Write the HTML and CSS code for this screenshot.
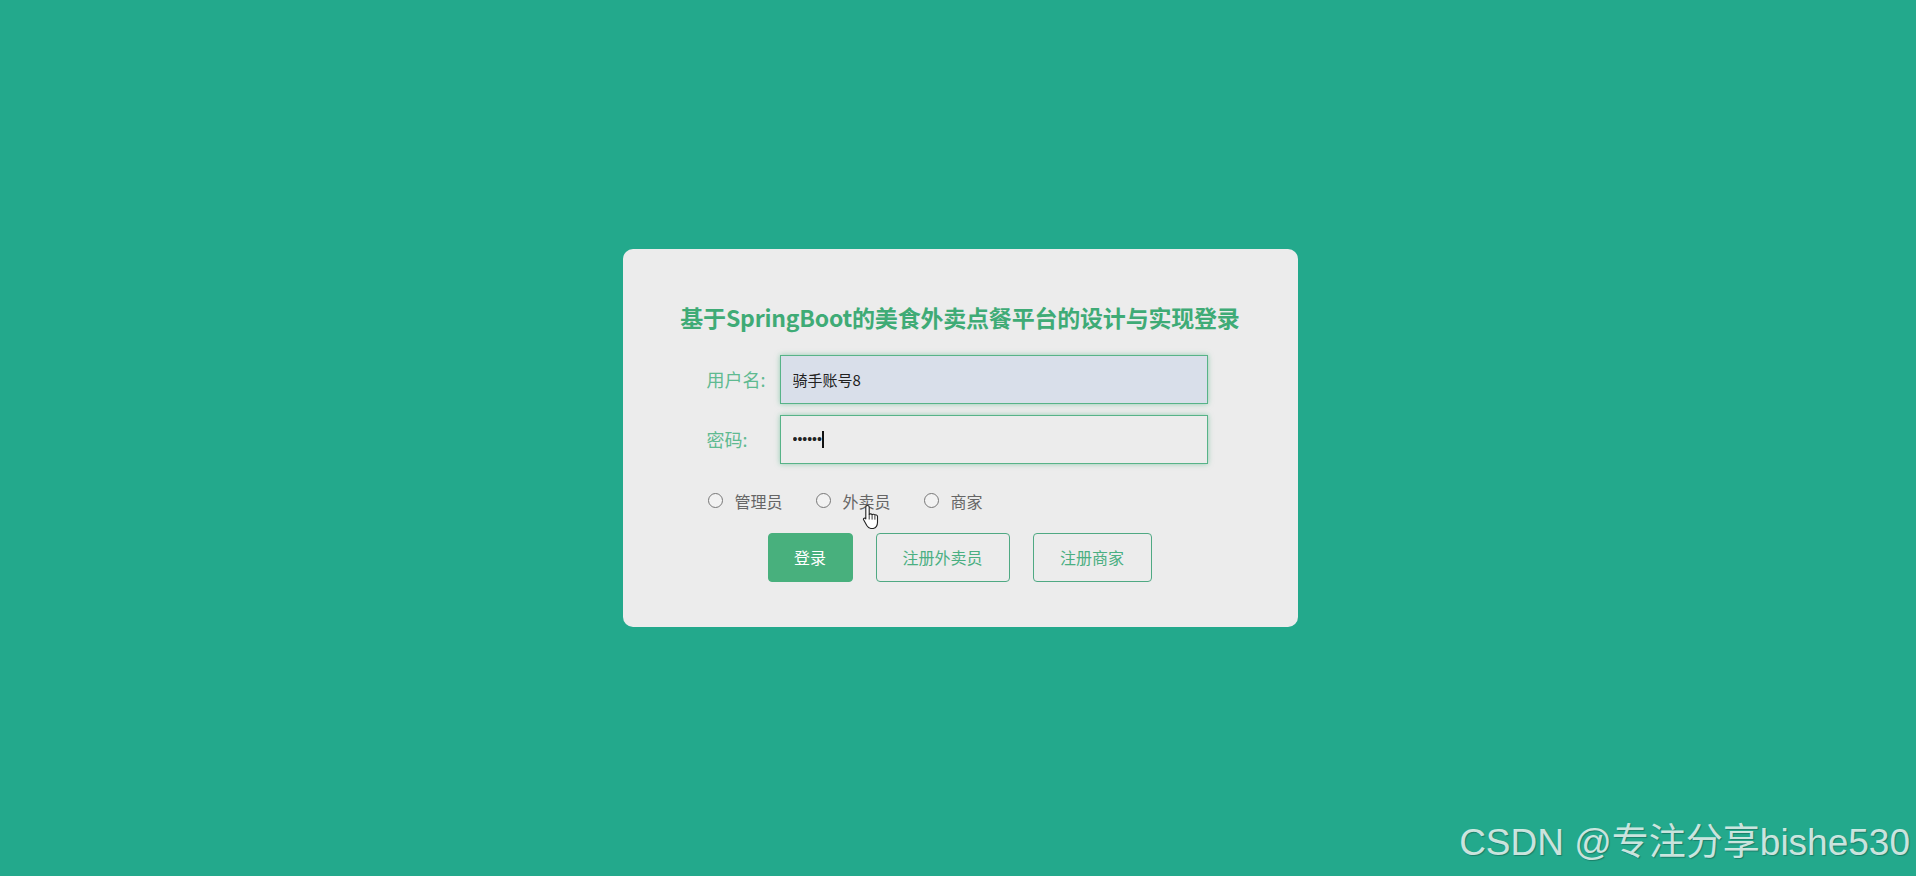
FILE: index.html
```html
<!DOCTYPE html>
<html lang="zh-CN">
<head>
<meta charset="utf-8">
<title>登录</title>
<link rel="stylesheet" href="styles.css">
</head>
<body>
<main class="page">
  <form class="card">
    <h1 class="title">基于SpringBoot的美食外卖点餐平台的设计与实现登录</h1>
    <div class="row">
      <label class="label" for="u">用户名:</label>
      <input class="field field-auto" id="u" type="text" value="骑手账号8">
    </div>
    <div class="row">
      <label class="label" for="p">密码:</label>
      <div class="field-wrap">
        <input class="field" id="p" type="password" value="123456">
        <span class="caret"></span>
      </div>
    </div>
    <div class="roles">
      <label class="role"><input type="radio" name="role" class="radio"><span>管理员</span></label>
      <label class="role"><input type="radio" name="role" class="radio"><span>外卖员</span></label>
      <label class="role"><input type="radio" name="role" class="radio"><span>商家</span></label>
      <svg class="cursor" width="18" height="26" viewBox="0 0 18 26">
        <path d="M5.5 1.5c1 0 1.7.7 1.7 1.7v7.3c.3-.9 2.7-.9 2.9.3.4-.9 2.6-.8 2.8.5.5-.7 2.5-.5 2.6 1.1v5.8c0 3-1.6 5.6-4.2 6.3H8.8c-1.8 0-3-1.4-4-3L1.6 15.8c-.5-1 .6-2.2 1.8-1.4l.4.4L3.8 3.2c0-1 .7-1.7 1.7-1.7z" fill="#fff" stroke="#222" stroke-width="1.1" stroke-linejoin="round"/>
        <path d="M7.2 10.5v5M10.1 11.1v4.5M12.9 11.9v3.8" stroke="#222" stroke-width="0.9" fill="none"/>
      </svg>
    </div>
    <div class="actions">
      <button type="button" class="btn btn-primary">登录</button>
      <button type="button" class="btn btn-outline">注册外卖员</button>
      <button type="button" class="btn btn-outline">注册商家</button>
    </div>
  </form>
  <div class="watermark">CSDN @专注分享bishe530</div>
</main>
</body>
</html>
```
FILE: styles.css
```css
html, body {
  margin: 0;
  padding: 0;
}
body {
  background: #23a98c;
  font-family: "Noto Sans CJK SC", "Noto Sans", sans-serif;
}
.page {
  position: relative;
  height: 876px;
  display: flex;
  align-items: center;
  justify-content: center;
}
.card {
  box-sizing: border-box;
  width: 675px;
  margin-left: 4px;
  margin-top: -1px;
  background: #ececec;
  border-radius: 10px;
  padding: 52px 0 45px 84px;
  display: flex;
  flex-direction: column;
}
.title {
  margin: 0 0 22px -84px;
  width: 675px;
  text-align: center;
  font-size: 23px;
  line-height: 32px;
  font-weight: 700;
  color: #3fab76;
  letter-spacing: -0.2px;
  white-space: nowrap;
}
.row {
  display: flex;
  align-items: center;
  margin-bottom: 11px;
}
.label {
  width: 73px;
  font-size: 18px;
  color: #5fba91;
  white-space: nowrap;
}
.field-wrap {
  position: relative;
  display: flex;
}
.field {
  box-sizing: border-box;
  width: 428px;
  height: 49px;
  margin: 0;
  padding: 0 12px;
  border: 1px solid #57b388;
  background: #ececec;
  box-shadow: 0 0 5px rgba(70, 175, 125, 0.55);
  font-family: "Noto Sans CJK SC", sans-serif;
  font-size: 15px;
  color: #222;
  outline: none;
}
.field-auto {
  background: #d9dfea;
}
.field[type="password"] {
  font-family: "Liberation Sans", sans-serif;
  font-size: 14px;
  letter-spacing: 0;
}
.caret {
  position: absolute;
  left: 42px;
  top: 16px;
  width: 2px;
  height: 17px;
  background: #111;
}
.roles {
  position: relative;
  display: flex;
  align-items: center;
  height: 20px;
  margin-top: 16px;
  margin-left: 1px;
}
.role {
  display: flex;
  align-items: center;
  width: 108px;
  font-size: 16px;
  color: #666;
}
.radio {
  appearance: none;
  -webkit-appearance: none;
  box-sizing: border-box;
  width: 15px;
  height: 15px;
  margin: 0 12px 0 0;
  border: 1px solid #777;
  border-radius: 50%;
  background: #f2f2f2;
}
.cursor {
  position: absolute;
  left: 154px;
  top: 13px;
}
.actions {
  display: flex;
  gap: 23px;
  margin: 22px 0 0 61px;
}
.btn {
  box-sizing: border-box;
  height: 49px;
  padding: 0 24px;
  border-radius: 4px;
  font-family: "Noto Sans CJK SC", sans-serif;
  font-size: 16px;
  cursor: pointer;
}
.btn-primary {
  width: 85px;
  background: #48b07d;
  border: 1px solid #48b07d;
  color: #fff;
}
.btn-outline {
  background: transparent;
  border: 1px solid #4fa983;
  color: #4aaf82;
}
.btn-outline:nth-child(2) {
  width: 134px;
}
.btn-outline:nth-child(3) {
  width: 119px;
}
.watermark {
  position: absolute;
  right: 6px;
  bottom: 10px;
  font-family: "Liberation Sans", "Noto Sans CJK SC", sans-serif;
  font-size: 37px;
  color: rgba(235, 245, 242, 0.85);
  text-shadow: 1px 1px 1px rgba(0, 0, 0, 0.25);
  white-space: nowrap;
}
```
